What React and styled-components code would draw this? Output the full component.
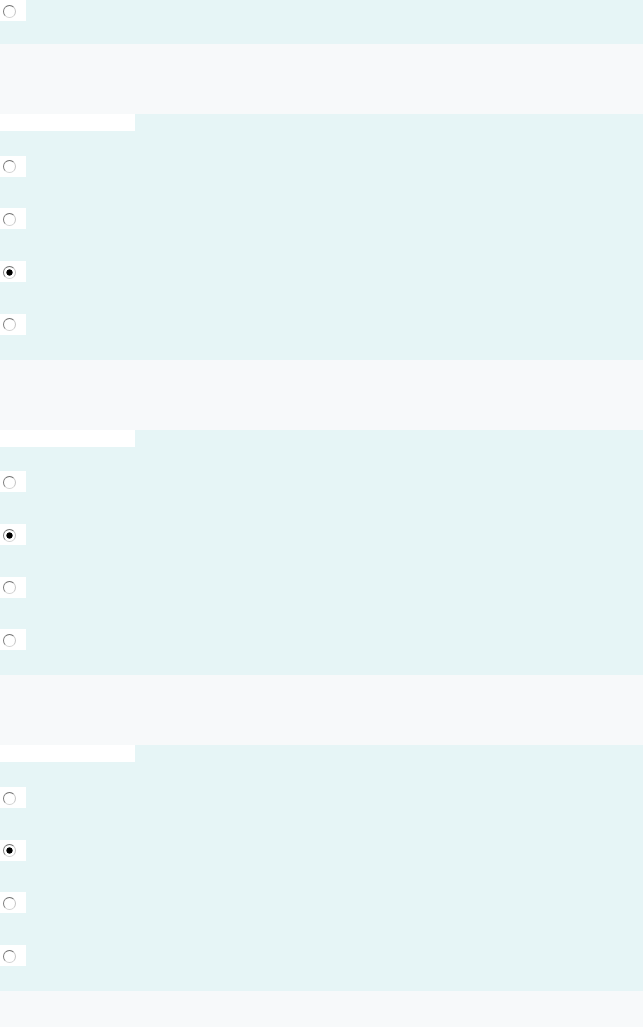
import React from 'react';
import styled, { createGlobalStyle } from 'styled-components';

const GlobalStyle = createGlobalStyle`
  html, body {
    margin: 0;
    padding: 0;
  }

  body {
    background: #f7f9fa;
    font-family: 'Liberation Sans', Arial, sans-serif;
    min-height: 100vh;
  }
`;

const Page = styled.div`
  display: flex;
  flex-direction: column;
  width: 100%;
`;

const Header = styled.div`
  height: 70px;
  background: #f7f9fa;
`;

const Body = styled.div`
  display: flex;
  flex-direction: column;
  background: #e6f5f6;
  padding-bottom: ${(p) => (p.$tail ? '23px' : '9px')};
`;

const LabelBar = styled.div`
  width: 135px;
  height: 17px;
  margin-bottom: 9px;
  background: #ffffff;
`;

const Row = styled.div`
  display: flex;
  align-items: center;
  height: ${(p) => (p.$compact ? 'auto' : '52.67px')};
`;

const Cell = styled.label`
  display: flex;
  align-items: center;
  width: 26px;
  height: 21px;
  background: #ffffff;
`;

const Radio = styled.input`
  appearance: none;
  box-sizing: border-box;
  width: 13px;
  height: 13px;
  margin: 1px 0 0 3px;
  border: 1px solid;
  border-color: #6e6e6e #c4c4c4 #d2d2d2 #7a7a7a;
  border-radius: 50%;
  background: #ffffff;

  &:checked {
    background: radial-gradient(circle, #000 0, #000 2.8px, #fff 3.4px);
  }
`;

const questions = [
  { id: 'q1', checked: 2 },
  { id: 'q2', checked: 1 },
  { id: 'q3', checked: 1 },
];

function Option({ name, checked, compact }) {
  return (
    <Row $compact={compact}>
      <Cell>
        <Radio type="radio" name={name} defaultChecked={checked} />
      </Cell>
    </Row>
  );
}

function Question({ id, checked }) {
  return (
    <>
      <Header />
      <Body>
        <LabelBar />
        {[0, 1, 2, 3].map((i) => (
          <Option key={i} name={id} checked={i === checked} />
        ))}
      </Body>
    </>
  );
}

export default function App() {
  return (
    <>
      <GlobalStyle />
      <Page>
        <Body $tail>
          <Option name="q0" compact />
        </Body>
        {questions.map((q) => (
          <Question key={q.id} {...q} />
        ))}
      </Page>
    </>
  );
}
